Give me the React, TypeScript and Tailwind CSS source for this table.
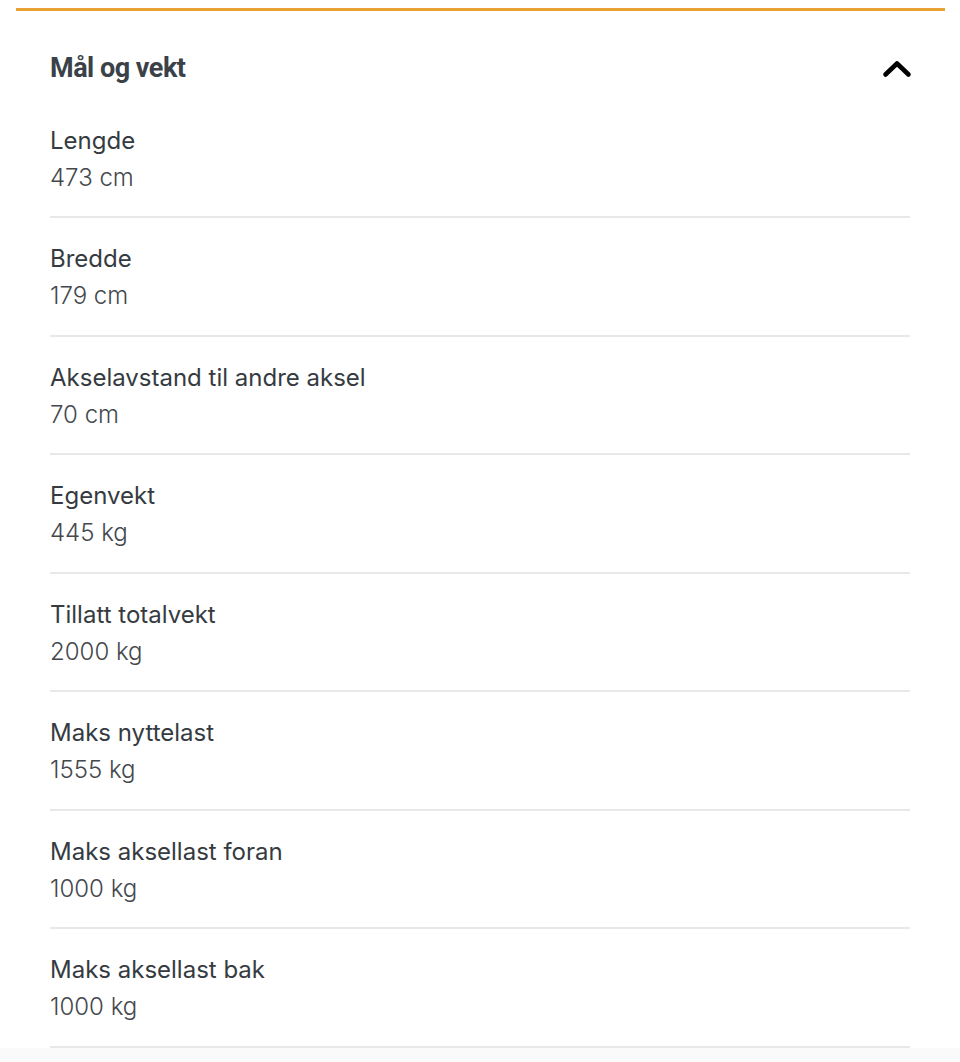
const rows = [
    { label: "Lengde", value: "473 cm" },
    { label: "Bredde", value: "179 cm" },
    { label: "Akselavstand til andre aksel", value: "70 cm" },
    { label: "Egenvekt", value: "445 kg" },
    { label: "Tillatt totalvekt", value: "2000 kg" },
    { label: "Maks nyttelast", value: "1555 kg" },
    { label: "Maks aksellast foran", value: "1000 kg" },
    { label: "Maks aksellast bak", value: "1000 kg" },
]

const App = () => {
    return (
        <div className="min-h-screen bg-[#fafafa] font-['Inter','Noto_Sans',sans-serif]">
            <div className="bg-white pt-[8px]">
                <div className="mx-[16px] w-[929px] h-[3px] bg-[#e9a034]" />
                <div className="px-[50px]">
                    <div className="flex items-center justify-between pt-[41px] pb-[15.5px]">
                        <h2 className="text-[27px] leading-[32px] font-bold text-[#3a4148] font-['Roboto',sans-serif] tracking-[-0.5px]">
                            Mål og vekt
                        </h2>
                        <svg width="30" height="20" viewBox="0 0 30 20" className="mr-[-2px] mt-[2px]">
                            <path d="M3.5 15.5 L15 4.5 L26.5 15.5" fill="none" stroke="#000" strokeWidth="4.6" strokeLinecap="round" strokeLinejoin="round" />
                        </svg>
                    </div>
                    {rows.map((r) => (
                        <div key={r.label} className="pt-[22px] pb-[20.5px] border-b-2 border-[#e8e8e8] leading-[37px] text-[24px]">
                            <div className="text-[#353b41]">{r.label}</div>
                            <div className="font-light text-[#44484d]">{r.value}</div>
                        </div>
                    ))}
                </div>
            </div>
        </div>
    )
}
export default App
